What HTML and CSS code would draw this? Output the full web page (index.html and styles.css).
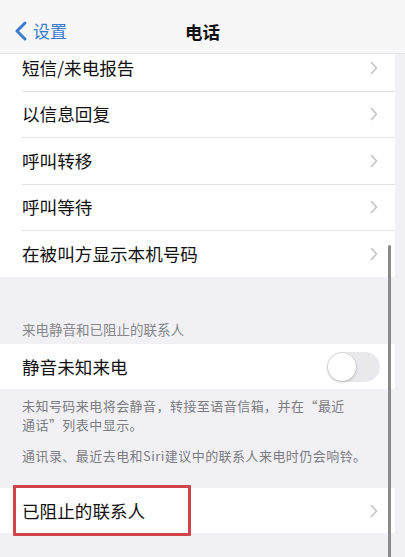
FILE: index.html
```html
<!DOCTYPE html>
<html lang="zh-CN">
<head>
<meta charset="utf-8">
<title>电话</title>
<link rel="stylesheet" href="styles.css">
</head>
<body>
<div class="screen">
  <header class="nav">
    <div class="back">
      <svg class="back-icon" width="14" height="20" viewBox="0 0 14 20"><path d="M11 2 L3 10 L11 18" fill="none" stroke="#3a7bd0" stroke-width="3" stroke-linecap="round" stroke-linejoin="round"/></svg>
      <span class="back-label">设置</span>
    </div>
    <div class="nav-title">电话</div>
  </header>
  <main class="content">
    <div class="group group-top">
      <div class="row"><div class="row-inner"><span class="label">短信/来电报告</span><svg class="chev" width="8" height="14" viewBox="0 0 8 14"><path d="M1.5 1.5 L6.5 7 L1.5 12.5" fill="none" stroke="#c4c4c8" stroke-width="1.6" stroke-linecap="round" stroke-linejoin="round"/></svg></div></div>
      <div class="row"><div class="row-inner"><span class="label">以信息回复</span><svg class="chev" width="8" height="14" viewBox="0 0 8 14"><path d="M1.5 1.5 L6.5 7 L1.5 12.5" fill="none" stroke="#c4c4c8" stroke-width="1.6" stroke-linecap="round" stroke-linejoin="round"/></svg></div></div>
      <div class="row"><div class="row-inner"><span class="label">呼叫转移</span><svg class="chev" width="8" height="14" viewBox="0 0 8 14"><path d="M1.5 1.5 L6.5 7 L1.5 12.5" fill="none" stroke="#c4c4c8" stroke-width="1.6" stroke-linecap="round" stroke-linejoin="round"/></svg></div></div>
      <div class="row"><div class="row-inner"><span class="label">呼叫等待</span><svg class="chev" width="8" height="14" viewBox="0 0 8 14"><path d="M1.5 1.5 L6.5 7 L1.5 12.5" fill="none" stroke="#c4c4c8" stroke-width="1.6" stroke-linecap="round" stroke-linejoin="round"/></svg></div></div>
      <div class="row"><div class="row-inner last"><span class="label">在被叫方显示本机号码</span><svg class="chev" width="8" height="14" viewBox="0 0 8 14"><path d="M1.5 1.5 L6.5 7 L1.5 12.5" fill="none" stroke="#c4c4c8" stroke-width="1.6" stroke-linecap="round" stroke-linejoin="round"/></svg></div></div>
    </div>
    <div class="section-header">来电静音和已阻止的联系人</div>
    <div class="group">
      <div class="row row-toggle"><div class="row-inner last"><span class="label">静音未知来电</span><span class="toggle"><span class="knob"></span></span></div></div>
    </div>
    <div class="footer">
      <p>未知号码来电将会静音，转接至语音信箱，并在“最近<br>通话”列表中显示。</p>
      <p class="second">通讯录、最近去电和Siri建议中的联系人来电时仍会响铃。</p>
    </div>
    <div class="group">
      <div class="row row-blocked"><div class="row-inner last"><span class="label">已阻止的联系人</span><svg class="chev" width="8" height="14" viewBox="0 0 8 14"><path d="M1.5 1.5 L6.5 7 L1.5 12.5" fill="none" stroke="#c4c4c8" stroke-width="1.6" stroke-linecap="round" stroke-linejoin="round"/></svg></div>
        <div class="highlight"></div>
      </div>
    </div>
  </main>
  <div class="scrollbar"></div>
</div>
</body>
</html>
```
FILE: styles.css
```css
html, body {
  margin: 0;
  padding: 0;
}
body {
  background: #f0f0f5;
  font-family: "Noto Sans CJK SC", "Noto Sans", sans-serif;
  color: #111111;
}
.screen {
  position: relative;
  width: 405px;
  height: 557px;
  overflow: hidden;
  background: #f0f0f5;
}
.nav {
  position: relative;
  z-index: 2;
  height: 53px;
  background: #f7f7f8;
  border-bottom: 1px solid #e4e4e6;
  display: flex;
  align-items: center;
  justify-content: center;
}
.back {
  position: absolute;
  left: 14px;
  top: 20px;
  display: flex;
  align-items: center;
  gap: 5px;
}
.back-icon {
  display: block;
}
.back-label {
  color: #3a7bd0;
  font-size: 17px;
  line-height: 22px;
}
.nav-title {
  font-size: 17.5px;
  font-weight: 700;
  line-height: 22px;
  margin-top: 10px;
  color: #111;
}
.content {
  width: 395px;
  margin-top: -9px;
}
.group {
  background: #ffffff;
}
.row {
  position: relative;
  padding-left: 22px;
}
.row-inner {
  height: 45.5px;
  border-bottom: 1px solid #e2e2e5;
  display: flex;
  align-items: center;
  justify-content: space-between;
  padding-right: 17px;
}
.row-inner.last {
  border-bottom: none;
  height: 46px;
}
.row-toggle .row-inner, .row-blocked .row-inner {
  height: 45px;
}
.label {
  font-size: 17.6px;
  line-height: 24px;
  color: #111;
}
.chev {
  display: block;
}
.section-header {
  padding: 43px 22px 6px;
  font-size: 13.5px;
  line-height: 18px;
  color: #86868b;
}
.toggle {
  position: relative;
  width: 53px;
  height: 30px;
  border-radius: 15px;
  background: #e9e9eb;
  margin-right: -2px;
  display: flex;
  align-items: center;
}
.knob {
  width: 28px;
  height: 28px;
  margin-left: 1px;
  border-radius: 50%;
  background: #ffffff;
  box-shadow: 0 1px 3px rgba(0,0,0,0.22), 0 0 0 0.5px rgba(0,0,0,0.08);
}
.footer {
  padding: 7px 22px 23px;
  font-size: 13px;
  letter-spacing: 0.45px;
  line-height: 19px;
  color: #7c7c82;
}
.footer p {
  margin: 0;
}
.footer p.second {
  margin-top: 12px;
}
.highlight {
  position: absolute;
  left: 13px;
  top: -3px;
  width: 172px;
  height: 45px;
  border: 3px solid #d0454a;
  border-radius: 1px;
}
.scrollbar {
  position: absolute;
  left: 388px;
  top: 245px;
  width: 3px;
  height: 320px;
  border-radius: 2px;
  background: #8a8a8c;
}
```
